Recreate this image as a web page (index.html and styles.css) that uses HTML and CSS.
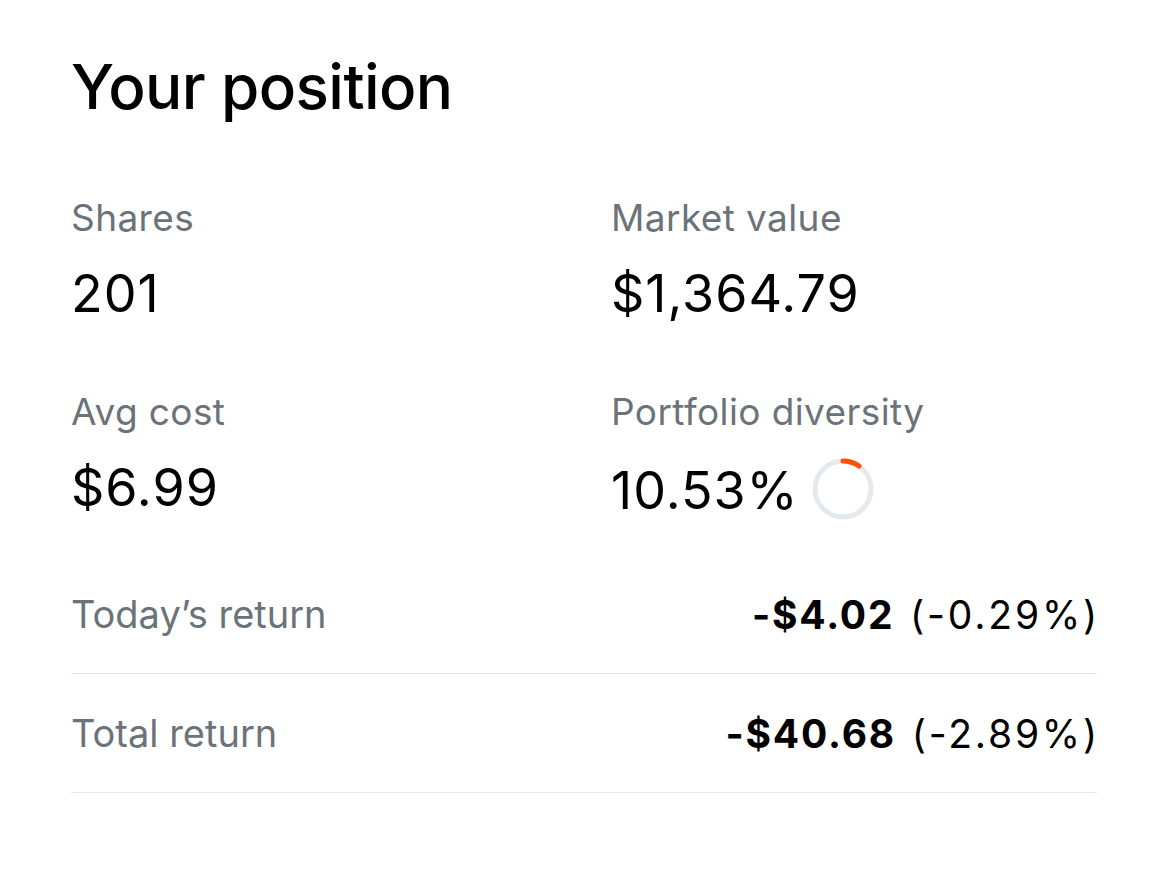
FILE: index.html
```html
<!DOCTYPE html>
<html>
<head>
<meta charset="utf-8">
<link rel="stylesheet" href="styles.css">
</head>
<body>
<main class="card">
  <h1 class="title">Your position</h1>
  <div class="grid">
    <div class="cell">
      <div class="label">Shares</div>
      <div class="value">201</div>
    </div>
    <div class="cell">
      <div class="label">Market value</div>
      <div class="value">$1,364.79</div>
    </div>
    <div class="cell">
      <div class="label">Avg cost</div>
      <div class="value">$6.99</div>
    </div>
    <div class="cell">
      <div class="label">Portfolio diversity</div>
      <div class="value with-ring">10.53%
        <svg class="ring" width="62" height="62" viewBox="0 0 62 62">
          <circle cx="31" cy="31" r="28" fill="none" stroke="#e3e9ed" stroke-width="5"/>
          <circle cx="31" cy="31" r="28" fill="none" stroke="#ff5000" stroke-width="5" stroke-linecap="round" stroke-dasharray="17 200" transform="rotate(-90 31 31)"/>
        </svg>
      </div>
    </div>
  </div>
  <div class="rows">
    <div class="row">
      <span class="row-label">Today’s return</span>
      <span class="row-value"><b>-$4.02</b> (-0.29%)</span>
    </div>
    <div class="row">
      <span class="row-label">Total return</span>
      <span class="row-value"><b>-$40.68</b> (-2.89%)</span>
    </div>
  </div>
</main>
</body>
</html>
```
FILE: styles.css
```css
html, body {
  margin: 0;
  padding: 0;
  background: #ffffff;
}
body {
  font-family: Inter, "Noto Sans", sans-serif;
  color: #000000;
}
.card {
  padding: 48px 73px 0 71px;
}
.title {
  margin: 0;
  font-size: 62px;
  font-weight: 500;
  line-height: 78px;
  letter-spacing: -0.6px;
}
.grid {
  display: grid;
  grid-template-columns: 540px 1fr;
  row-gap: 66px;
  margin-top: 70px;
}
.label {
  font-size: 37px;
  line-height: 44px;
  color: #6b737a;
  letter-spacing: 0.4px;
}
.value {
  font-size: 52px;
  line-height: 60px;
  margin-top: 24px;
  letter-spacing: 1px;
}
.with-ring {
  display: flex;
  align-items: center;
  gap: 13px;
}
.ring {
  display: block;
  margin-bottom: 4px;
}
.rows {
  margin-top: 31px;
}
.row {
  display: flex;
  justify-content: space-between;
  align-items: center;
  height: 118px;
  border-bottom: 1.5px solid #e3e9ed;
  font-size: 39px;
}
.row-label {
  color: #6b737a;
  letter-spacing: 0px;
  font-size: 38px;
}
.row-value {
  color: #000;
  letter-spacing: 2.8px;
  margin-right: -3px;
}
.row-value b {
  font-weight: 700;
  letter-spacing: 1.8px;
  margin-right: 2px;
}
```
